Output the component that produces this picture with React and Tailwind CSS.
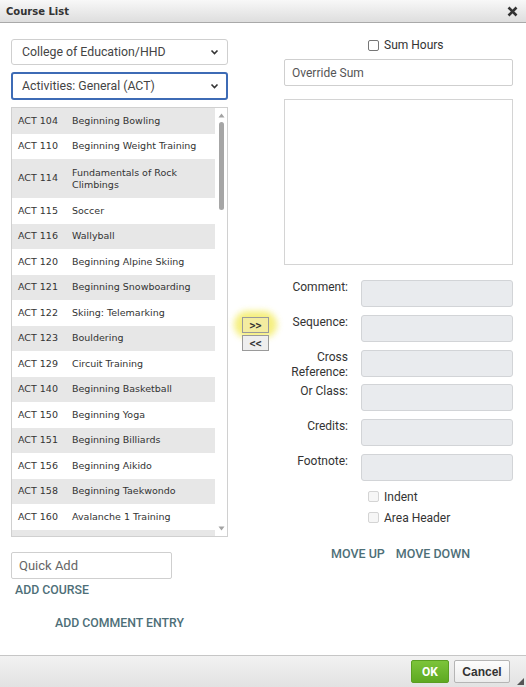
import { useState } from "react";

const courses = [
  ["ACT 104", "Beginning Bowling"],
  ["ACT 110", "Beginning Weight Training"],
  ["ACT 114", "Fundamentals of Rock Climbings"],
  ["ACT 115", "Soccer"],
  ["ACT 116", "Wallyball"],
  ["ACT 120", "Beginning Alpine Skiing"],
  ["ACT 121", "Beginning Snowboarding"],
  ["ACT 122", "Skiing: Telemarking"],
  ["ACT 123", "Bouldering"],
  ["ACT 129", "Circuit Training"],
  ["ACT 140", "Beginning Basketball"],
  ["ACT 150", "Beginning Yoga"],
  ["ACT 151", "Beginning Billiards"],
  ["ACT 156", "Beginning Aikido"],
  ["ACT 158", "Beginning Taekwondo"],
  ["ACT 160", "Avalanche 1 Training"],
  ["ACT 170", "Beginning Racquetball"],
];

const fields = [
  ["Comment:"],
  ["Sequence:"],
  ["Cross", "Reference:"],
  ["Or Class:"],
  ["Credits:"],
  ["Footnote:"],
];

function Chevron() {
  return (
    <svg width="9" height="6" viewBox="0 0 9 6" className="shrink-0">
      <path d="M1.5 1.5 L4.5 4.5 L7.5 1.5" fill="none" stroke="#333" strokeWidth="1.6" />
    </svg>
  );
}

function Box({ light }) {
  return (
    <span
      className={
        "inline-block h-[11px] w-[11px] rounded-[2px] border " +
        (light ? "border-[#d4d4d4] bg-[#f6f6f6]" : "border-[#767676] bg-white")
      }
    />
  );
}

export default function App() {
  const [selected] = useState(null);

  return (
    <div className="flex h-[687px] w-[526px] flex-col overflow-hidden bg-white font-['Roboto',sans-serif] text-[#333]">
      {/* title bar */}
      <div className="flex h-[23px] items-center justify-between border-b border-[#a9a9a9] bg-gradient-to-b from-[#f8f8f8] to-[#dedede] px-[6px]">
        <span className="font-['DejaVu_Sans',sans-serif] text-[10px] font-bold text-[#333]">Course List</span>
        <svg width="11" height="11" viewBox="0 0 11 11" className="mr-[2px]">
          <path d="M1.5 1.5 L9.5 9.5 M9.5 1.5 L1.5 9.5" stroke="#333" strokeWidth="2.6" />
        </svg>
      </div>

      <div className="flex flex-1">
        {/* left column */}
        <div className="ml-[11px] flex w-[217px] flex-col pt-[16px]">
          <div className="flex h-[26px] items-center justify-between rounded-[3px] border border-[#cfcfcf] bg-white pl-[10px] pr-[8px] text-[12.3px] text-[#444]">
            <span>College of Education/HHD</span>
            <Chevron />
          </div>
          <div className="mt-[7px] flex h-[28px] items-center justify-between rounded-[3px] border-2 border-[#3d6bb5] bg-white pl-[9px] pr-[7px] text-[12.3px] text-[#444]">
            <span>Activities: General (ACT)</span>
            <Chevron />
          </div>

          <div className="mt-[7px] flex h-[430px] overflow-hidden border border-[#d0d0d0] font-['DejaVu_Sans',sans-serif] text-[9.5px] text-[#333]">
            <div className="flex-1">
              {courses.map(([code, title], i) => (
                <div
                  key={code}
                  className={
                    "flex items-center py-[6px] pl-[6px] " +
                    (i % 2 === 0 ? "bg-[#e7e7e7] " : "bg-white ") +
                    (title.length > 26 ? "min-h-[39px]" : "h-[25.5px]") +
                    (selected === code ? " bg-[#cde]" : "")
                  }
                >
                  <span className="w-[54px] shrink-0">{code}</span>
                  <span className="w-[132px] leading-[12px]">{title}</span>
                </div>
              ))}
            </div>
            <div className="relative flex w-[12px] flex-col items-center bg-white">
              <svg width="7" height="5" viewBox="0 0 7 5" className="mt-[5px]">
                <path d="M0.5 4.5 L3.5 0.5 L6.5 4.5 Z" fill="#a3a3a3" />
              </svg>
              <div className="mt-[4px] h-[88px] w-[5px] rounded-full bg-[#a6a6a6]" />
              <div className="flex-1" />
              <svg width="7" height="5" viewBox="0 0 7 5" className="mb-[5px]">
                <path d="M0.5 0.5 L3.5 4.5 L6.5 0.5 Z" fill="#a3a3a3" />
              </svg>
            </div>
          </div>

          <div className="mt-[15px] flex h-[27px] w-[161px] items-center rounded-[2px] border border-[#cfcfcf] pl-[7px] text-[13px] text-[#666]">
            Quick Add
          </div>
          <span className="mt-[2px] pl-[4px] text-[12.3px] font-medium text-[#4e6f78]">ADD COURSE</span>
          <span className="mt-[15px] pl-[44px] text-[12.3px] font-medium text-[#4e6f78]">ADD COMMENT ENTRY</span>
        </div>

        {/* transfer buttons */}
        <div className="relative ml-[14px] flex w-[27px] flex-col pt-[294px]">
          <div className="absolute left-[-8px] top-[288px] h-[27px] w-[43px] rounded-full bg-[#f2ea55] opacity-75 blur-[3px]" />
          <div className="relative flex h-[16px] w-[27px] items-center justify-center border border-[#9a9a9a] bg-[#f3eca0] font-['DejaVu_Sans_Mono',monospace] text-[10px] font-bold text-[#333]">
            &gt;&gt;
          </div>
          <div className="relative mt-[2px] flex h-[16px] w-[27px] items-center justify-center border border-[#9a9a9a] bg-[#eeeeee] font-['DejaVu_Sans_Mono',monospace] text-[10px] font-bold text-[#333]">
            &lt;&lt;
          </div>
        </div>

        {/* right column */}
        <div className="ml-[15px] flex w-[229px] flex-col pt-[15px]">
          <div className="flex h-[14px] items-center gap-[5px] pl-[84px] text-[12px] text-[#333]">
            <Box />
            <span>Sum Hours</span>
          </div>
          <div className="mt-[7px] flex h-[27px] items-center rounded-[2px] border border-[#cfcfcf] pl-[7px] text-[12px] text-[#555]">
            Override Sum
          </div>
          <div className="mt-[13px] h-[166px] border border-[#d4d4d4] bg-white" />

          <div className="mt-[15px] flex flex-col gap-[7.8px]">
            {fields.map((lines) => (
              <div key={lines.join()} className="flex h-[27px] items-start">
                <div className="w-[64px] text-right text-[12px] leading-[15px] text-[#333]">
                  {lines.map((l) => (
                    <div key={l}>{l}</div>
                  ))}
                </div>
                <div className="ml-[13px] h-[27px] w-[152px] rounded-[3px] border border-[#d2d4d7] bg-[#e9ebee]" />
              </div>
            ))}
          </div>

          <div className="mt-[8px] flex flex-col gap-[5px] pl-[84px] text-[12px] text-[#333]">
            <div className="flex h-[16px] items-center gap-[5px]">
              <Box light />
              <span>Indent</span>
            </div>
            <div className="flex h-[16px] items-center gap-[5px]">
              <Box light />
              <span>Area Header</span>
            </div>
          </div>

          <div className="mt-[19px] flex gap-[11px] pl-[47px] text-[12.5px] font-medium text-[#4e6f78]">
            <span>MOVE UP</span>
            <span>MOVE DOWN</span>
          </div>
        </div>
      </div>

      {/* footer */}
      <div className="relative flex h-[32px] items-center justify-end gap-[5px] border-t border-[#c6c6c6] bg-gradient-to-b from-[#f2f2f2] to-[#e2e2e2] pr-[16px]">
        <div className="flex h-[23px] w-[38px] items-center justify-center rounded-[2px] border border-[#5a9e22] bg-gradient-to-b from-[#7cc43a] to-[#5ea921] text-[12px] font-bold text-white">
          OK
        </div>
        <div className="flex h-[23px] w-[56px] items-center justify-center rounded-[2px] border border-[#b5b5b5] bg-gradient-to-b from-[#fdfdfd] to-[#ececec] font-['Liberation_Sans',sans-serif] text-[12px] font-bold text-[#333]">
          Cancel
        </div>
        <svg width="7" height="7" viewBox="0 0 7 7" className="absolute bottom-[2px] right-[2px]">
          <path d="M7 0 L7 7 L0 7 Z" fill="#555" />
        </svg>
      </div>
    </div>
  );
}
